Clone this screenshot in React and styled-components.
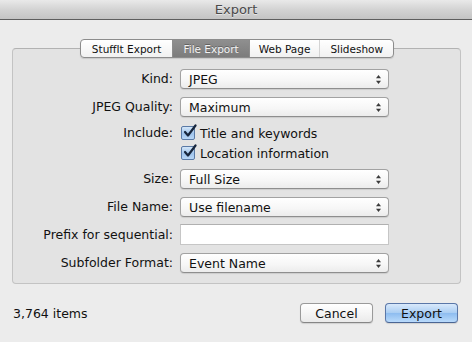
import React from 'react'
import styled, { createGlobalStyle } from 'styled-components'

const GlobalStyle = createGlobalStyle`
  html, body {
    margin: 0;
    padding: 0;
    background: #ececec;
  }
  body {
    font-family: 'DejaVu Sans', 'Liberation Sans', sans-serif;
    font-size: 12.5px;
    color: #111;
  }
`

const Window = styled.div`
  width: 472px;
  height: 342px;
  background: #ececec;
  display: flex;
  flex-direction: column;
  overflow: hidden;
`

const TitleBar = styled.div`
  height: 19px;
  border-bottom: 1px solid #5e5e5e;
  background: linear-gradient(#e9e9e9, #d3d3d3 50%, #c4c4c4);
  display: flex;
  align-items: center;
  justify-content: center;
  color: #4a4a4a;
  font-size: 13px;
  text-shadow: 0 1px 0 rgba(255, 255, 255, 0.5);
`

const Body = styled.div`
  padding: 19px 11px 0 12px;
  display: flex;
  flex-direction: column;
`

const TabBar = styled.div`
  display: flex;
  align-self: center;
  margin-left: 1px;
  height: 17px;
  border: 1px solid #8c8c8c;
  border-radius: 4px;
  background: linear-gradient(#ffffff, #f1f1f1);
  box-shadow: 0 1px 1px rgba(0, 0, 0, 0.12);
  overflow: hidden;
  position: relative;
  z-index: 1;
`

const Tab = styled.div`
  display: flex;
  align-items: center;
  padding: 0 ${p => p.$pad}px;
  font-size: 10.5px;
  color: ${p => (p.$active ? '#f4f4f4' : '#111')};
  background: ${p => (p.$active ? 'linear-gradient(#8f8f8f, #7c7c7c)' : 'transparent')};
  text-shadow: ${p => (p.$active ? '0 -1px 0 rgba(0,0,0,0.3)' : 'none')};
  border-left: 1px solid ${p => (p.$sep ? '#d4d4d4' : '#8c8c8c')};
  &:first-child {
    border-left: none;
  }
`

const Group = styled.div`
  margin-top: -10px;
  height: 236px;
  border: 1px solid #c3c3c3;
  border-top-color: #b2b2b2;
  border-radius: 4px;
  background: #e3e3e3;
  padding: 20px 0 0 0;
  box-sizing: border-box;
  display: flex;
  flex-direction: column;
`

const Row = styled.div`
  display: flex;
  align-items: ${p => (p.$top ? 'flex-start' : 'center')};
  margin-top: ${p => p.$mt || 0}px;
`

const Label = styled.div`
  width: 167px;
  text-align: right;
  padding-right: 7px;
  box-sizing: border-box;
  line-height: ${p => p.$lh || 20}px;
  flex-shrink: 0;
  color: #111;
`

const Popup = styled.div`
  width: 209px;
  height: 20px;
  box-sizing: border-box;
  border: 1px solid #a2a2a2;
  border-bottom-color: #8e8e8e;
  border-radius: 4px;
  background: linear-gradient(#ffffff, #f6f6f6 60%, #ececec);
  box-shadow: 0 1px 1px rgba(0, 0, 0, 0.1);
  display: flex;
  align-items: center;
  justify-content: space-between;
  padding: 0 7px 0 8px;
  color: #111;
`

const Arrows = styled.svg`
  width: 5px;
  height: 9px;
  display: block;
`

const TextField = styled.div`
  width: 209px;
  height: 21px;
  box-sizing: border-box;
  border: 1px solid #c6c6c6;
  border-top-color: #b0b0b0;
  background: #fff;
`

const CheckList = styled.div`
  display: flex;
  flex-direction: column;
`

const CheckRow = styled.div`
  display: flex;
  align-items: center;
  height: 20px;
  gap: 5px;
  margin-left: 1px;
`

const Box = styled.div`
  width: 14px;
  height: 14px;
  box-sizing: border-box;
  border: 1px solid #5a7aa6;
  border-radius: 2px;
  background: linear-gradient(#d4e6f8, #9fc4ec 55%, #b8d6f6);
  position: relative;
  flex-shrink: 0;
`

const CheckMark = styled.svg`
  position: absolute;
  left: 0px;
  top: -3px;
  width: 15px;
  height: 15px;
`

const Footer = styled.div`
  display: flex;
  align-items: center;
  padding: 19px 14px 0 13px;
`

const Count = styled.div`
  flex: 1;
  color: #111;
`

const Button = styled.div`
  width: 73px;
  height: 20px;
  box-sizing: border-box;
  margin-left: ${p => p.$ml || 0}px;
  border: 1px solid ${p => (p.$primary ? '#5a77a8' : '#9a9a9a')};
  border-bottom-color: ${p => (p.$primary ? '#4a6593' : '#868686')};
  border-radius: 4px;
  background: ${p =>
    p.$primary
      ? 'linear-gradient(#d9e9fb, #a9cdf3 50%, #8ebdf0 52%, #b9dafb)'
      : 'linear-gradient(#ffffff, #f4f4f4 55%, #eaeaea)'};
  box-shadow: 0 1px 1px rgba(0, 0, 0, 0.12);
  display: flex;
  align-items: center;
  justify-content: center;
  color: #111;
`

const Updown = () => (
  <Arrows viewBox="0 0 5 9">
    <path d="M2.5 0 L5 3.3 L0 3.3 Z" fill="#3a3a3a" />
    <path d="M2.5 9 L5 5.7 L0 5.7 Z" fill="#3a3a3a" />
  </Arrows>
)

const Check = ({ children }) => (
  <CheckRow>
    <Box>
      <CheckMark viewBox="0 0 15 15">
        <path d="M3 8 L6 11.5 L13.5 1.5" fill="none" stroke="#17263d" strokeWidth="2.2" strokeLinecap="round" strokeLinejoin="round" />
      </CheckMark>
    </Box>
    <span>{children}</span>
  </CheckRow>
)

const Select = ({ value }) => (
  <Popup>
    <span>{value}</span>
    <Updown />
  </Popup>
)

export default function App() {
  return (
    <Window>
      <GlobalStyle />
      <TitleBar>Export</TitleBar>
      <Body>
        <TabBar>
          <Tab $pad={11}>StuffIt Export</Tab>
          <Tab $pad={10} $active>File Export</Tab>
          <Tab $pad={9}>Web Page</Tab>
          <Tab $pad={10} $sep>Slideshow</Tab>
        </TabBar>
        <Group>
          <Row>
            <Label>Kind:</Label>
            <Select value="JPEG" />
          </Row>
          <Row $mt={8}>
            <Label>JPEG Quality:</Label>
            <Select value="Maximum" />
          </Row>
          <Row $mt={6} $top>
            <Label>Include:</Label>
            <CheckList>
              <Check>Title and keywords</Check>
              <Check>Location information</Check>
            </CheckList>
          </Row>
          <Row $mt={6}>
            <Label>Size:</Label>
            <Select value="Full Size" />
          </Row>
          <Row $mt={8}>
            <Label>File Name:</Label>
            <Select value="Use filename" />
          </Row>
          <Row $mt={7}>
            <Label $lh={21}>Prefix for sequential:</Label>
            <TextField />
          </Row>
          <Row $mt={8}>
            <Label>Subfolder Format:</Label>
            <Select value="Event Name" />
          </Row>
        </Group>
      </Body>
      <Footer>
        <Count>3,764 items</Count>
        <Button>Cancel</Button>
        <Button $primary $ml={12}>Export</Button>
      </Footer>
    </Window>
  )
}
